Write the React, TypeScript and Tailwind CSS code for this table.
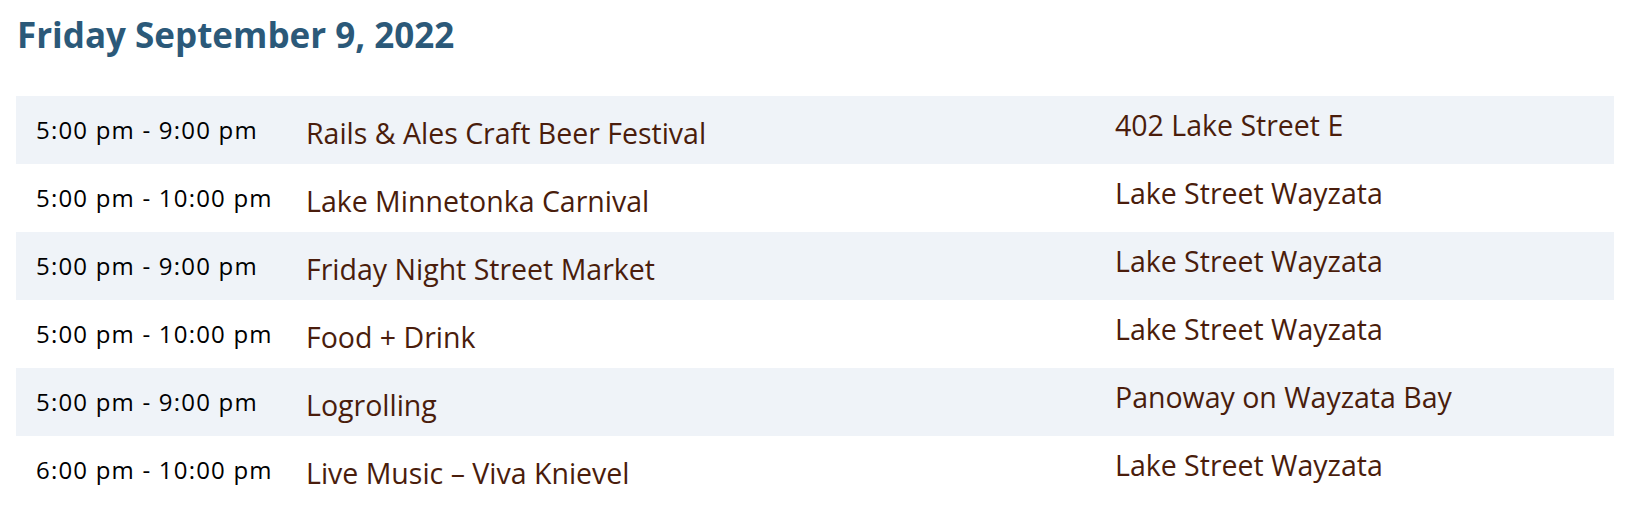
import React from 'react';

type Row = { time: string; event: string; place: string };

const ROWS: Row[] = [
  { time: '5:00 pm - 9:00 pm', event: 'Rails & Ales Craft Beer Festival', place: '402 Lake Street E' },
  { time: '5:00 pm - 10:00 pm', event: 'Lake Minnetonka Carnival', place: 'Lake Street Wayzata' },
  { time: '5:00 pm - 9:00 pm', event: 'Friday Night Street Market', place: 'Lake Street Wayzata' },
  { time: '5:00 pm - 10:00 pm', event: 'Food + Drink', place: 'Lake Street Wayzata' },
  { time: '5:00 pm - 9:00 pm', event: 'Logrolling', place: 'Panoway on Wayzata Bay' },
  { time: '6:00 pm - 10:00 pm', event: 'Live Music – Viva Knievel', place: 'Lake Street Wayzata' },
];

const App: React.FC = () => {
  return (
    <div className="bg-white pl-4 pr-3 pt-[15px] font-['Open_Sans',sans-serif] w-[1626px] h-[510px] overflow-hidden">
      {/* Day heading */}
      <h2 className="text-[35px] leading-[40px] font-bold text-[#2b5979] pl-[1px]">
        Friday September 9, 2022
      </h2>

      {/* Schedule */}
      <div className="mt-[41px]">
        {ROWS.map((row, i) => (
          <div
            key={i}
            className={`grid grid-cols-[270px_809px_1fr] h-[68px] ${i % 2 === 0 ? 'bg-[#eff3f8]' : 'bg-white'}`}
          >
            <div className="pl-5 pt-[20px] text-[24px] leading-[28px] tracking-[1.2px] text-black">{row.time}</div>
            <div className="pl-5 pt-[21px] text-[28.5px] leading-[32px] text-[#4a1d0c]">{row.event}</div>
            <div className="pl-5 pt-[13px] text-[28.5px] leading-[32px] text-[#4a1d0c]">{row.place}</div>
          </div>
        ))}
      </div>
    </div>
  );
};

export default App;
